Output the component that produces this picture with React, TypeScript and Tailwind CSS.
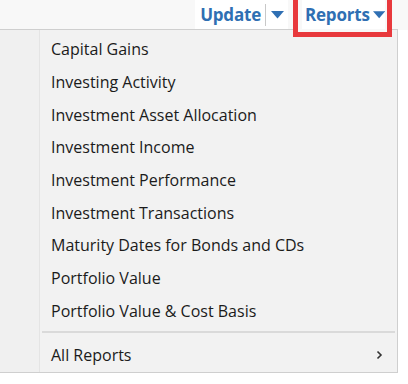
import React from 'react';

const items = [
  'Capital Gains',
  'Investing Activity',
  'Investment Asset Allocation',
  'Investment Income',
  'Investment Performance',
  'Investment Transactions',
  'Maturity Dates for Bonds and CDs',
  'Portfolio Value',
  'Portfolio Value & Cost Basis',
];

const Caret = () => (
  <svg width="13" height="8" viewBox="0 0 13 8">
    <path d="M0 0 L13 0 L6.5 7.5 Z" fill="#2f6fb3" />
  </svg>
);

export default function App() {
  return (
    <div
      className="w-[408px] h-[384px] bg-white overflow-hidden"
      style={{ fontFamily: '"Open Sans", "Noto Sans", sans-serif' }}
    >
      {/* Toolbar */}
      <div className="h-[30px] bg-[#f8f8f8] flex items-start">
        <div className="flex-1" />
        <div className="flex items-center h-[29px] bg-white pl-[5px] pr-[4px] mr-[5px]">
          <span className="text-[17px] font-bold text-[#2f6fb3] leading-none tracking-[-0.2px]">Update</span>
          <div className="w-px h-[22px] bg-[#c8c8c8] ml-[4px] mr-[5px]" />
          <Caret />
        </div>
        <div className="relative z-10 border-[5px] border-[#e8393d] border-t-0 h-[37px] w-[99px] mr-[16px] bg-[#f8f8f8] pl-[4px] pr-[2px]">
          <div className="bg-white h-[29px] flex items-center justify-center gap-[3px] pl-[3px]">
            <span className="text-[17px] font-bold text-[#2f6fb3] leading-none tracking-[-0.2px]">Reports</span>
            <Caret />
          </div>
        </div>
      </div>

      {/* Menu */}
      <div className="relative -mt-[1px] w-[398px] h-[344px] bg-[#f2f2f2] border border-[#cfcfcf] border-l-0 flex">
        <div className="w-[40px] border-r border-[#e4e4e4] bg-[#f0f0f0]" />
        <div className="flex-1 flex flex-col pt-[3px]">
          {items.map((t) => (
            <div key={t} className="h-[32.7px] flex items-center pl-[11px] text-[16px] text-[#1b1b1b]">
              {t}
            </div>
          ))}
          <div className="h-[2px] bg-[#dadada] mt-[4px] mb-[9px] ml-[2px] mr-[2px]" />
          <div className="h-[26px] flex items-center pl-[11px] pr-[14px] text-[16px] text-[#1b1b1b]">
            <span className="flex-1">All Reports</span>
            <svg width="7" height="10" viewBox="0 0 7 10">
              <path d="M1.5 1.5 L5 5 L1.5 8.5" stroke="#333" strokeWidth="1.6" fill="none" />
            </svg>
          </div>
        </div>
      </div>
    </div>
  );
}
